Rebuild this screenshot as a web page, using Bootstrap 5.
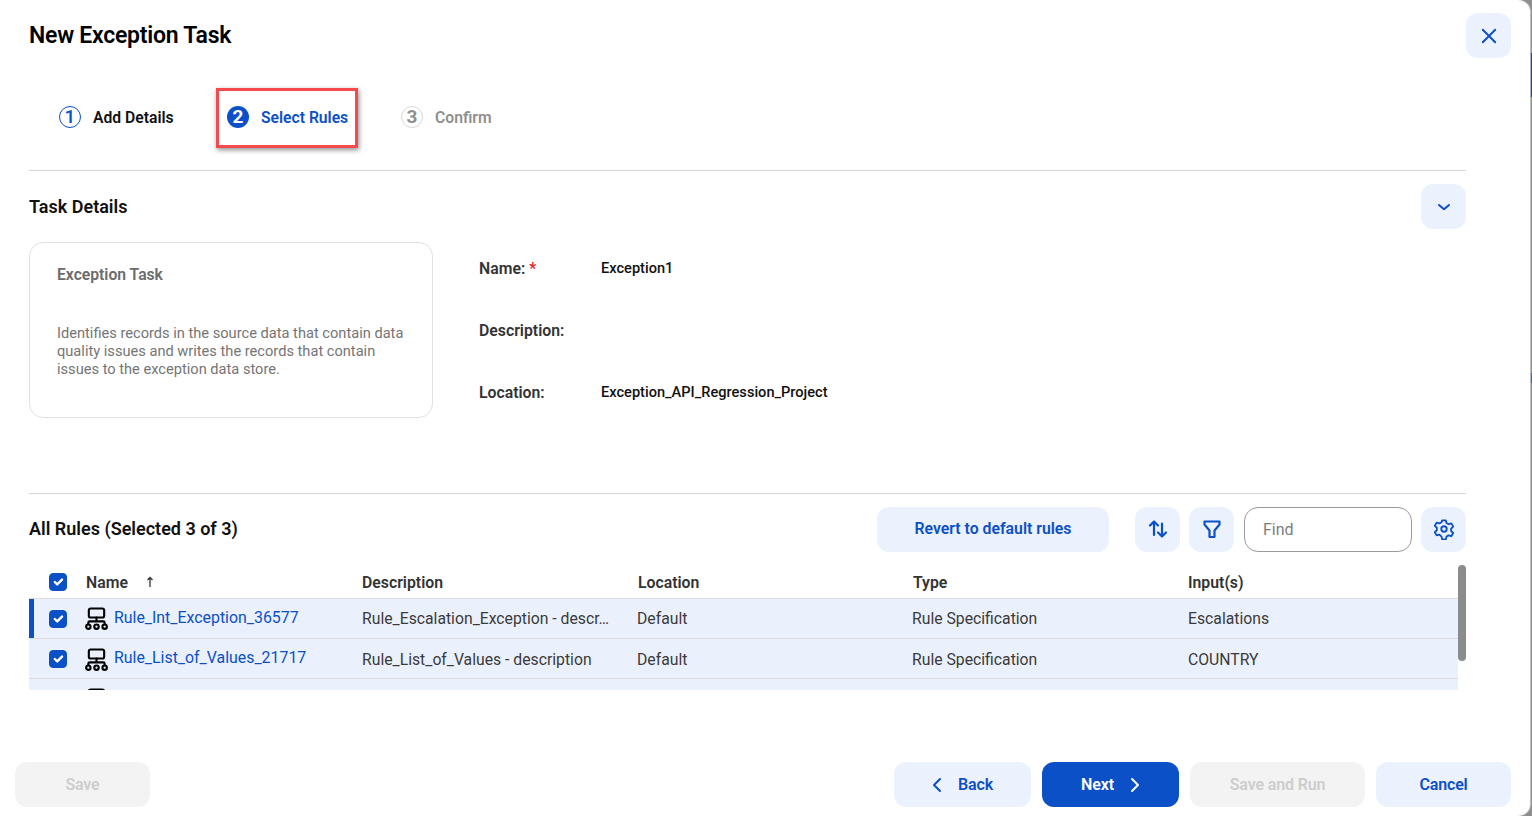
<!DOCTYPE html>
<html lang="en">
<head>
    <meta charset="UTF-8">
    <meta name="viewport" content="width=device-width, initial-scale=1">
    <title>New Exception Task</title>
    <link href="https://cdn.jsdelivr.net/npm/bootstrap@5.3.0/dist/css/bootstrap.min.css" rel="stylesheet">
    <style>
        html, body {
            height: 100%;
            overflow: hidden;
        }

        body {
            background: #8e8e8e;
            font-family: Roboto, "Liberation Sans", sans-serif;
            font-size: 16px;
            color: #212121;
        }

        .backdrop-mark {
            position: absolute;
            right: 0;
            width: 2px;
            background: #16367c;
        }

        .backdrop-mark.mark-top { top: 53px; height: 44px; }
        .backdrop-mark.mark-low { top: 373px; height: 10px; background: #3d5a92; }

        .dialog-shell {
            position: relative;
            width: 1530px;
            height: 816px;
            background: #fff;
            border-radius: 0 12px 12px 0;
            box-shadow: 1px 0 1px #c4c4c4;
        }

        .dialog-head {
            padding: 13px 19px 0 29px;
            height: 87px;
        }

        .dialog-title {
            font-size: 23px;
            font-weight: 600;
            line-height: 44px;
            color: #000;
            letter-spacing: -.25px;
            margin: 1px 0 0;
        }

        .icon-btn {
            width: 45px;
            height: 45px;
            padding: 0;
            border: 0;
            border-radius: 12px;
            background: #ebf2fe;
            color: #0c50c8;
            flex: none;
        }

        .step-bar {
            margin: 0 64px 0 29px;
            height: 84px;
            padding: 0 0 22px 30px;
            border-bottom: 1px solid #d3d3d3;
        }

        .step-item {
            font-size: 15.7px;
            font-weight: 600;
            gap: 12px;
        }

        .step-first { width: 168px; color: #111; }
        .step-second { width: 174px; color: #0c50c8; }
        .step-third { color: #8f8f8f; }

        .step-num {
            width: 22px;
            height: 22px;
            border-radius: 50%;
            font-size: 19px;
            line-height: 19px;
            text-align: center;
            flex: none;
        }

        .step-first .step-num { border: 1.5px solid #0c50c8; color: #0c50c8; font-weight: 500; }
        .step-second .step-num { background: #0c50c8; color: #fff; line-height: 22px; font-weight: 700; }
        .step-third .step-num { border: 1.5px solid #d8d8d8; color: #8f8f8f; font-weight: 700; }

        .note-box {
            position: absolute;
            left: -11px;
            top: -18px;
            width: 142px;
            height: 60px;
            border: 3px solid #f44a4f;
            box-shadow: 1px 2px 5px rgba(0, 0, 0, .45);
        }

        .section-box {
            margin: 0 64px 0 29px;
        }

        .section-title {
            font-size: 18px;
            font-weight: 600;
            line-height: 45px;
            color: #111;
            margin: 0;
        }

        .task-section { height: 323px; border-bottom: 1px solid #d3d3d3; padding-top: 13px; }

        .task-tile {
            width: 404px;
            height: 176px;
            margin-top: 13px;
            padding: 23px 20px 23px 27px;
            border: 1px solid #e1e1e1;
            border-radius: 14px;
            font-size: 14.63px;
            line-height: 18px;
            color: #757575;
        }

        .task-tile-name {
            font-size: 15.7px;
            font-weight: 600;
            margin-bottom: 40px;
            color: #6b6b6b;
        }

        .field-list {
            margin: 13px 0 0 46px;
            font-size: 14.6px;
            font-weight: 500;
            color: #111;
        }

        .field-row { height: 18px; line-height: 18px; }
        .field-label { width: 122px; padding-top: 1px; font-size: 15.8px; font-weight: 600; color: #333; }
        .field-gap-a { margin: 17px 0 44px; }
        .field-gap-b { margin-bottom: 44px; }
        .req-mark { color: #e0242a; }

        .rules-bar {
            padding-top: 13px;
        }

        .rules-bar .section-title { margin: -2px auto 0 0; }
        .rules-bar svg { margin-top: -2px; }

        .revert-btn {
            width: 232px;
            height: 45px;
            margin-right: 26px;
            padding-bottom: 2px;
            border: 0;
            border-radius: 12px;
            background: #ebf2fe;
            color: #0c50c8;
            font-size: 15.8px;
            font-weight: 600;
        }

        .gap-nine { margin-left: 9px; }
        .gap-ten { margin-left: 10px; }

        .find-input {
            width: 168px;
            height: 45px;
            padding: 0 18px;
            border: 1px solid #9a9a9a;
            border-radius: 14px;
            font-size: 16px;
        }

        .find-input::placeholder { color: #7d7d7d; }

        .rules-wrap {
            position: relative;
            height: 125px;
            margin-top: 13px;
            overflow: hidden;
        }

        .rules-table {
            width: 1429px;
            table-layout: fixed;
            border-collapse: collapse;
        }

        .rules-table th {
            height: 33px;
            padding: 4px 0 0 1px;
            font-size: 15.8px;
            font-weight: 600;
            color: #333;
            border-bottom: 1px solid #dcdcdc;
        }

        .rules-table td {
            height: 40px;
            padding: 2px 0 0;
            background: #ebf1fc;
            border-bottom: 1px solid #dcdcdc;
            color: #3a3a3a;
            font-size: 15.75px;
            white-space: nowrap;
        }

        .rules-table tr + tr td { padding-top: 3px; }
        .rules-table td:nth-child(3), .rules-table td:nth-child(6) { padding-left: 1px; }
        .rules-table .check-cell { padding-left: 20px; }
        .rules-table .check-cell .form-check-input { display: block; }
        .rules-table .lead-row .check-cell { box-shadow: inset 5px 0 0 #0c50c8; }

        .rules-table .form-check-input {
            width: 18px;
            height: 18px;
            margin: -1px 0 0;
            border-radius: 4px;
        }

        .rules-table th .form-check-input { margin-top: -3px; }

        .rules-table .form-check-input:checked {
            background-color: #0c50c8;
            border-color: #0c50c8;
        }

        .rule-name { gap: 6px; }
        .rule-name a { font-size: 15.9px; color: #0c50c8; text-decoration: none; margin-top: -3px; }
        .rule-name svg { flex: none; margin-top: -1px; }
        .sort-mark { margin-left: 14px; vertical-align: 1px; color: #333; }

        .scroll-thumb {
            position: absolute;
            right: 0;
            top: 0;
            width: 8px;
            height: 96px;
            border-radius: 4px;
            background: #8c8c8c;
        }

        .dialog-foot {
            margin-top: 72px;
            padding: 0 19px 0 15px;
            gap: 11px;
        }

        .foot-btn {
            height: 45px;
            width: 137px;
            border: 0;
            border-radius: 12px;
            background: #ebf2fe;
            color: #0c50c8;
            font-size: 16px;
            font-weight: 600;
            letter-spacing: -.15px;
        }

        .foot-btn.is-main { background: #0c50c8; color: #fff; }
        .foot-btn.is-off { background: #f3f3f3; color: #cdcdcd; }
        .foot-save { width: 135px; margin-right: auto; }
        .foot-run { width: 175px; }
        .foot-cancel { width: 135px; }
    </style>
</head>
<body>
    <div class="backdrop-mark mark-top"></div>
    <div class="backdrop-mark mark-low"></div>

    <div class="dialog-shell d-flex flex-column">
        <div class="dialog-head d-flex justify-content-between align-items-start">
            <h1 class="dialog-title">New Exception Task</h1>
            <button class="icon-btn d-flex align-items-center justify-content-center" aria-label="Close">
                <svg width="16" height="16" viewBox="0 0 16 16" fill="none" stroke="currentColor" stroke-width="2" stroke-linecap="round"><path d="M1.800 1.800l12.400 12.400M14.200 1.800L1.800 14.200"/></svg>
            </button>
        </div>

        <div class="step-bar d-flex align-items-center">
            <div class="step-item step-first d-flex align-items-center"><span class="step-num">1</span>Add Details</div>
            <div class="step-item step-second d-flex align-items-center position-relative"><span class="step-num">2</span>Select Rules<span class="note-box"></span></div>
            <div class="step-item step-third d-flex align-items-center"><span class="step-num">3</span>Confirm</div>
        </div>

        <div class="section-box task-section">
            <div class="d-flex justify-content-between">
                <h2 class="section-title">Task Details</h2>
                <button class="icon-btn d-flex align-items-center justify-content-center" aria-label="Collapse">
                    <svg width="14" height="14" viewBox="0 0 14 14" fill="none" stroke="currentColor" stroke-width="2" stroke-linecap="round" stroke-linejoin="round"><path d="M2 5l5 4.200L12 5"/></svg>
                </button>
            </div>
            <div class="d-flex">
                <div class="task-tile">
                    <div class="task-tile-name">Exception Task</div>
                    Identifies records in the source data that contain data quality issues and writes the records that contain issues to the exception data store.
                </div>
                <div class="field-list">
                    <div class="field-row d-flex field-gap-a"><span class="field-label">Name: <span class="req-mark">*</span></span>Exception1</div>
                    <div class="field-row d-flex field-gap-b"><span class="field-label">Description:</span></div>
                    <div class="field-row d-flex"><span class="field-label">Location:</span>Exception_API_Regression_Project</div>
                </div>
            </div>
        </div>

        <div class="section-box">
            <div class="rules-bar d-flex align-items-center">
                <h2 class="section-title">All Rules (Selected 3 of 3)</h2>
                <button class="revert-btn">Revert to default rules</button>
                <button class="icon-btn d-flex align-items-center justify-content-center" aria-label="Sort">
                    <svg width="20" height="20" viewBox="0 0 20 20" fill="none" stroke="currentColor" stroke-width="2.200" stroke-linecap="round" stroke-linejoin="round"><path d="M6 16V2.500M2 6.500l4-4 4 4M14 4.500v13M10 13.500l4 4 4-4"/></svg>
                </button>
                <button class="icon-btn gap-nine d-flex align-items-center justify-content-center" aria-label="Filter">
                    <svg width="20" height="20" viewBox="0 0 20 20" fill="none" stroke="currentColor" stroke-width="2.200" stroke-linejoin="round"><path d="M2.500 2.500h15v3l-5 6v6.500h-5v-6.500l-5-6z"/></svg>
                </button>
                <input class="find-input gap-ten" type="text" placeholder="Find">
                <button class="icon-btn gap-nine d-flex align-items-center justify-content-center" aria-label="Settings">
                    <svg width="22" height="22" viewBox="0 0 24 24" fill="none" stroke="currentColor" stroke-width="2" stroke-linejoin="round"><circle cx="12" cy="12" r="3"/><path d="M10 2.500h4l.7 3 2.300 1.300 3-.9 2 3.500-2.200 2.100v2.800l2.200 2.100-2 3.500-3-.9-2.300 1.300-.7 3h-4l-.7-3L7 18.100l-3 .9-2-3.500 2.200-2.100v-2.800L2 8.500l2-3.500 3 .9 2.300-1.300z"/></svg>
                </button>
            </div>

            <div class="rules-wrap">
                <table class="rules-table">
                    <colgroup>
                        <col style="width: 56px"><col style="width: 276px"><col style="width: 276px"><col style="width: 275px"><col style="width: 275px"><col>
                    </colgroup>
                    <thead>
                        <tr>
                            <th class="check-cell"><input class="form-check-input" type="checkbox" checked aria-label="Select all"></th>
                            <th>Name <svg class="sort-mark" width="8" height="11" viewBox="0 0 8 11" fill="none" stroke="currentColor" stroke-width="1.300"><path d="M4 11V1.500M1.500 4L4 1.500 6.500 4"/></svg></th>
                            <th>Description</th>
                            <th>Location</th>
                            <th>Type</th>
                            <th>Input(s)</th>
                        </tr>
                    </thead>
                    <tbody>
                        <tr class="lead-row">
                            <td class="check-cell"><input class="form-check-input" type="checkbox" checked aria-label="Select rule"></td>
                            <td><div class="rule-name d-flex align-items-center"><svg width="23" height="23" viewBox="0 0 24 24" fill="none" stroke="#000" stroke-width="2.200" stroke-linecap="round"><rect x="4" y="1.500" width="16" height="9.500" rx="2"/><path d="M12 11v4M3.500 18v-1.500q0-1.500 1.500-1.500h14q1.500 0 1.500 1.500V18"/><circle cx="3.500" cy="20.500" r="2.300"/><circle cx="12" cy="20.500" r="2.300"/><circle cx="20.500" cy="20.500" r="2.300"/></svg><a href="#">Rule_Int_Exception_36577</a></div></td>
                            <td>Rule_Escalation_Exception - descr…</td>
                            <td>Default</td>
                            <td>Rule Specification</td>
                            <td>Escalations</td>
                        </tr>
                        <tr>
                            <td class="check-cell"><input class="form-check-input" type="checkbox" checked aria-label="Select rule"></td>
                            <td><div class="rule-name d-flex align-items-center"><svg width="23" height="23" viewBox="0 0 24 24" fill="none" stroke="#000" stroke-width="2.200" stroke-linecap="round"><rect x="4" y="1.500" width="16" height="9.500" rx="2"/><path d="M12 11v4M3.500 18v-1.500q0-1.500 1.500-1.500h14q1.500 0 1.500 1.500V18"/><circle cx="3.500" cy="20.500" r="2.300"/><circle cx="12" cy="20.500" r="2.300"/><circle cx="20.500" cy="20.500" r="2.300"/></svg><a href="#">Rule_List_of_Values_21717</a></div></td>
                            <td>Rule_List_of_Values - description</td>
                            <td>Default</td>
                            <td>Rule Specification</td>
                            <td>COUNTRY</td>
                        </tr>
                        <tr>
                            <td class="check-cell"><input class="form-check-input" type="checkbox" checked aria-label="Select rule"></td>
                            <td><div class="rule-name d-flex align-items-center"><svg width="23" height="23" viewBox="0 0 24 24" fill="none" stroke="#000" stroke-width="2.200" stroke-linecap="round"><rect x="4" y="1.500" width="16" height="9.500" rx="2"/><path d="M12 11v4M3.500 18v-1.500q0-1.500 1.500-1.500h14q1.500 0 1.500 1.500V18"/><circle cx="3.500" cy="20.500" r="2.300"/><circle cx="12" cy="20.500" r="2.300"/><circle cx="20.500" cy="20.500" r="2.300"/></svg></div></td>
                            <td></td><td></td><td></td><td></td>
                        </tr>
                    </tbody>
                </table>
                <div class="scroll-thumb"></div>
            </div>
        </div>

        <div class="dialog-foot d-flex">
            <button class="foot-btn is-off foot-save">Save</button>
            <button class="foot-btn d-flex align-items-center justify-content-center gap-3">
                <svg width="10" height="16" viewBox="0 0 10 16" fill="none" stroke="currentColor" stroke-width="2" stroke-linecap="round" stroke-linejoin="round"><path d="M8 2L2 8l6 6"/></svg>Back
            </button>
            <button class="foot-btn is-main d-flex align-items-center justify-content-center gap-3">Next
                <svg width="10" height="16" viewBox="0 0 10 16" fill="none" stroke="currentColor" stroke-width="2" stroke-linecap="round" stroke-linejoin="round"><path d="M2 2l6 6-6 6"/></svg>
            </button>
            <button class="foot-btn is-off foot-run">Save and Run</button>
            <button class="foot-btn foot-cancel">Cancel</button>
        </div>
    </div>

    <script src="https://cdn.jsdelivr.net/npm/bootstrap@5.3.0/dist/js/bootstrap.bundle.min.js"></script>
</body>
</html>
